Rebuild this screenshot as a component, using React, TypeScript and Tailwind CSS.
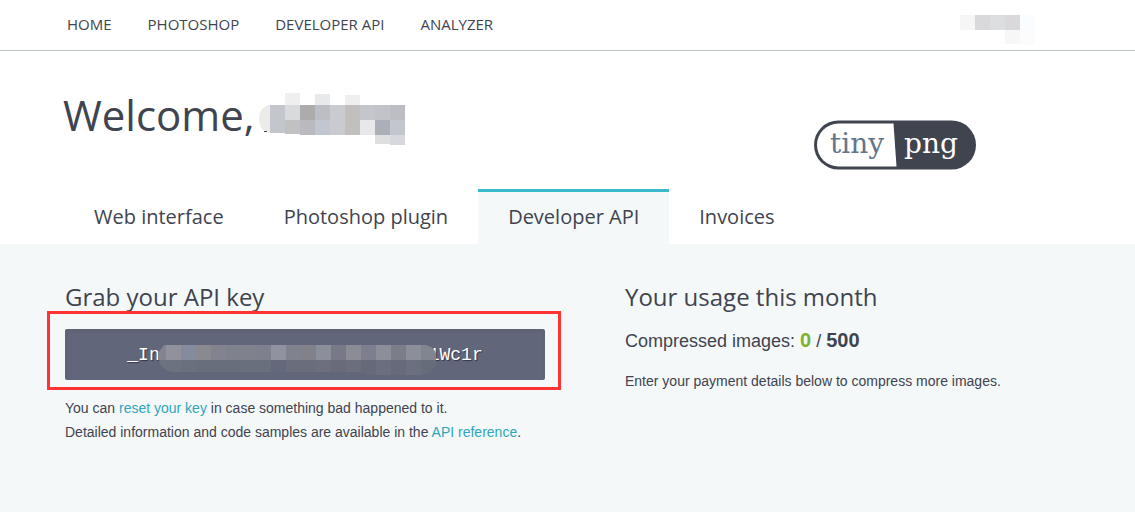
import React from "react";

type Cell = [x: number, y: number, w: number, h: number, fill: string];

function Mosaic({ cells }: { cells: Cell[] }) {
  return (
    <>
      {cells.map(([x, y, w, h, fill], i) => (
        <rect key={i} x={x} y={y} width={w} height={h} fill={fill} />
      ))}
    </>
  );
}

const accountCells: Cell[] = [
  [0, 0, 15, 15, "#f6f6f6"],
  [15, 0, 15, 15, "#d9d9db"],
  [30, 0, 15, 15, "#dcdee0"],
  [45, 0, 15, 15, "#d9d9db"],
  [60, 0, 15, 15, "#fafdff"],
  [45, 15, 15, 14, "#f7f7f8"],
  [60, 15, 15, 15, "#fcfcfd"],
];

const nameCells: Cell[] = [
  [11, 12, 15, 28, "#c4c6cd"],
  [26, 0, 15, 12, "#efefef"],
  [26, 12, 15, 15, "#d9dadc"],
  [26, 27, 15, 14, "#c1c1c1"],
  [41, 12, 15, 15, "#acacad"],
  [41, 27, 15, 15, "#b9babf"],
  [56, 1, 15, 11, "#e8e9eb"],
  [56, 12, 15, 15, "#bbbfc5"],
  [56, 27, 15, 15, "#c1c6d0"],
  [71, 12, 15, 30, "#cacbd0"],
  [86, 2, 15, 10, "#efefef"],
  [86, 12, 15, 30, "#c1c0be"],
  [101, 12, 15, 15, "#c5c6cb"],
  [101, 27, 15, 15, "#e8e8ea"],
  [116, 12, 15, 15, "#c0c3c9"],
  [116, 27, 15, 15, "#abafb8"],
  [116, 42, 15, 9, "#dfdfdf"],
  [131, 12, 15, 15, "#bdbec4"],
  [131, 27, 15, 15, "#c3c6cd"],
  [131, 42, 15, 10, "#d7d8dd"],
];

const keyTop = [
  "#83848f", "#90919a", "#848b9c", "#888a90", "#83838f", "#7d828c", "#7f818c",
  "#7f808d", "#9092a0", "#80828d", "#808189", "#8a8f9a", "#787987", "#8b8c96",
  "#7d7f8e", "#8a8f9a", "#7b7d89", "#8a8f9a", "#81858f",
];
const keyBottom = [
  "#6c7280", "#6c7280", "#6a707e", "#686e7b", "#686e7b", "#686e7b", "#6a6f7d",
  "#6a6f7d", "#64687c", "#6a6d7b", "#6a6d7b", "#6c707e", "#696b7a", "#6b6f7d",
  "#656979", "#6a6f7e", "#666a7b", "#6b7080", "#676c7b",
];
const keyCells: Cell[] = [
  ...keyTop.map((c, i): Cell => [i * 15 - 7, 0, 15, 15, c]),
  ...keyBottom.map((c, i): Cell => [i * 15 - 7, 15, 15, i > 12 ? 15 : 12, c]),
];

function Logo() {
  return (
    <svg className="block h-[50px] w-[162px]" viewBox="0 0 162 50" role="img" aria-label="tinypng">
      <rect x="0" y="0.5" width="162" height="49" rx="24.5" fill="#40444f" />
      <path d="M24.5 3.5H79.5L82.5 46.5H24.5A21.5 21.5 0 0 1 24.5 3.5Z" fill="#fff" />
      <g fontFamily="'DejaVu Serif', serif" fontSize="28">
        <text x="16" y="33" fill="#63758a">tiny</text>
        <text x="90" y="33" fill="#fff">png</text>
      </g>
    </svg>
  );
}

const navItems = ["HOME", "PHOTOSHOP", "DEVELOPER API", "ANALYZER"];
const tabs = ["Web interface", "Photoshop plugin", "Developer API", "Invoices"];

export default function App() {
  return (
    <div className="flex min-h-screen flex-col bg-white font-['Liberation_Sans',sans-serif] text-sm text-[#40444f]">
      <header className="flex h-[51px] items-center justify-between border-b border-[#bdc6cb] pr-[100px] pl-[67px]">
        <nav className="flex gap-9 font-['Open_Sans',sans-serif] text-[15px]">
          {navItems.map((item) => (
            <a key={item} href="#">{item}</a>
          ))}
        </nav>
        <a href="#" aria-label="Account" className="pt-2.5">
          <svg className="block h-[30px] w-[75px]" viewBox="0 0 75 30" aria-hidden="true">
            <Mosaic cells={accountCells} />
          </svg>
        </a>
      </header>

      <div className="flex justify-between pt-10 pr-[159px] pl-[63px]">
        <h1 className="flex items-start font-['Open_Sans',sans-serif] text-[42px] leading-[48px]">
          Welcome,
          <svg className="mt-0.5 ml-1 block h-[52px] w-[147px]" viewBox="0 0 147 52" aria-hidden="true">
            <path d="M11 12Q0 14 0 26T11 40Z" fill="#ebebea" />
            <Mosaic cells={nameCells} />
            <rect x="5" y="38" width="3" height="1" fill="#40444f" />
          </svg>
        </h1>
        <div className="pt-[29px]">
          <Logo />
        </div>
      </div>

      <nav className="mt-[19px] flex pl-16 font-['Open_Sans',sans-serif] text-xl">
        {tabs.map((tab) => (
          <a
            key={tab}
            href="#"
            aria-current={tab === "Developer API" ? "page" : undefined}
            className="h-[55px] border-t-3 border-transparent px-[30px] pt-[11px] aria-[current=page]:border-[#3abacd] aria-[current=page]:bg-[#f4f8f9]"
          >
            {tab}
          </a>
        ))}
      </nav>

      <main className="grid flex-1 grid-cols-[480px_1fr] content-start gap-x-20 bg-[#f4f8f9] px-[65px] pt-9">
        <section>
          <h2 className="font-['Open_Sans',sans-serif] text-2xl leading-[34px]">Grab your API key</h2>
          <div className="relative mt-[15px]">
            <div className="flex h-[51px] items-center justify-center rounded-xs bg-[#62667a] font-['Liberation_Mono',monospace] text-lg text-white inset-shadow-sm text-shadow-[1px_1px_1px_#33364a]">
              <code className="font-[inherit]">_In</code>
              <svg className="relative mt-2.5 -ml-0.5 block h-[30px] w-[279px]" viewBox="0 0 279 30" aria-hidden="true">
                <defs>
                  <clipPath id="key-shape">
                    <path d="M6 0H268Q279 3 279 14T266 30H210L202 27H14Q0 24 0 8Z" />
                  </clipPath>
                </defs>
                <g clipPath="url(#key-shape)">
                  <Mosaic cells={keyCells} />
                </g>
              </svg>
              <code className="-ml-2 font-[inherit]">1Wc1r</code>
            </div>
            <div className="pointer-events-none absolute -top-[18px] -right-4 -bottom-2.5 -left-[18px] border-3 border-[#fe3434]" />
          </div>
          <p className="mt-4 leading-6">
            You can <a href="#" className="text-[#30a6b8]">reset your key</a> in case something bad happened to it.
            <br />
            Detailed information and code samples are available in the{" "}
            <a href="#" className="text-[#30a6b8]">API reference</a>.
          </p>
        </section>
        <section>
          <h2 className="font-['Open_Sans',sans-serif] text-2xl leading-[34px]">Your usage this month</h2>
          <p className="mt-3.5 text-lg leading-6">
            Compressed images: <b className="text-xl leading-6 text-[#7fb22c]">0</b> /{" "}
            <b className="text-xl leading-6">500</b>
          </p>
          <p className="mt-4 leading-6">Enter your payment details below to compress more images.</p>
        </section>
      </main>
    </div>
  );
}
